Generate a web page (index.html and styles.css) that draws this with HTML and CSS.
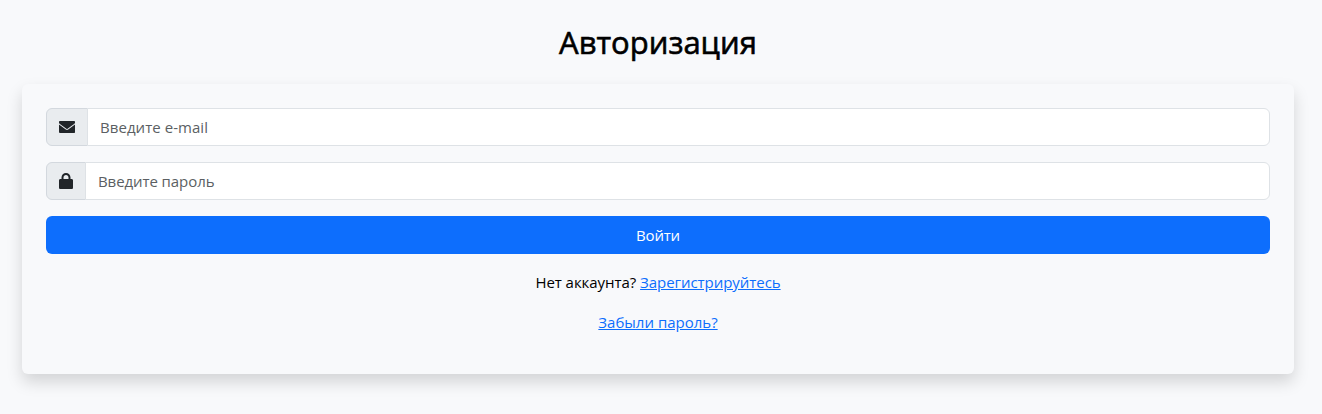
FILE: index.html
```
<!DOCTYPE html>
<html lang="ru">
<head>
<meta charset="utf-8">
<title>Авторизация</title>
<link rel="stylesheet" href="styles.css">
</head>
<body>
<main class="page">
  <h1 class="title">Авторизация</h1>
  <form class="card">
    <div class="group">
      <span class="addon"><svg class="icon" width="16" height="16" viewBox="0 0 512 512"><path d="M24 64C8 64 0 76 0 96v20c0 14 7.100 26.300 19.200 34.400L236.800 313.600c11.400 8.500 27 8.500 38.400 0L492.800 150.400c12.100-9.100 19.200-20 19.200-34.400V96c0-20-8-32-24-32H24zM0 176V416c0 22 10 32 32 32H480c22 0 32-10 32-32V176L294.400 339.200c-22.800 17.100-54 17.100-76.800 0L0 176z"/></svg></span>
      <input class="field field-email" type="email" placeholder="Введите e-mail">
    </div>
    <div class="group">
      <span class="addon"><svg class="icon" width="14" height="16" viewBox="0 0 448 512"><path d="M144 144v48H304V144c0-44.200-35.800-80-80-80s-80 35.800-80 80zM80 192V144C80 64.500 144.500 0 224 0s144 64.500 144 144v48h32c32 0 48 20 48 48V464c0 32-16 48-48 48H48c-32 0-48-16-48-48V240c0-28 16-48 48-48H80z"/></svg></span>
      <input class="field field-password" type="password" placeholder="Введите пароль">
    </div>
    <button class="submit" type="button">Войти</button>
    <p class="note note-register"><span class="ask">Нет аккаунта?</span> <a class="link link-register" href="#">Зарегистрируйтесь</a></p>
    <p class="note"><a class="link link-forgot" href="#">Забыли пароль?</a></p>
  </form>
</main>
</body>
</html>
```
FILE: styles.css
```
* { box-sizing: border-box; }
body {
  margin: 0;
  min-height: 100vh;
  background: #f8f9fb;
  color: #000;
  font: 400 15px/24px "Open Sans", "Noto Sans", sans-serif;
}
.page { min-height: 100vh; padding: 23px 28px 0 22px; }
.title {
  margin: 0 0 23px;
  font-size: 31px;
  font-weight: 500;
  line-height: 38px;
  text-align: center;
  -webkit-text-stroke: .6px #000;
}
.card {
  height: 290px;
  padding: 24px;
  border-radius: 6px;
  background: #f8f9fb;
  box-shadow: 0 8px 16px rgba(0, 0, 0, .15);
}
.group { display: flex; height: 38px; margin-bottom: 16px; }
.addon {
  display: flex;
  align-items: center;
  padding: 0 12px;
  border: 1px solid #d3d8de;
  border-radius: 6px 0 0 6px;
  background: #e9ecef;
}
.icon { display: block; fill: #212529; }
.field {
  flex: 1;
  min-width: 0;
  margin-left: -1px;
  padding: 6px 12px;
  border: 1px solid #dee2e6;
  border-radius: 0 6px 6px 0;
  background: #fff;
  color: #212529;
  font: inherit;
}
.field::placeholder { color: #5b5f63; opacity: 1; }
.field-email { letter-spacing: .05px; }
.field-password { letter-spacing: -.08px; }
.submit {
  display: block;
  width: 100%;
  height: 38px;
  padding: 0;
  border: 0;
  border-radius: 6px;
  background: #0d6efd;
  color: #fff;
  font: inherit;
  letter-spacing: -.2px;
}
.note { margin: 16px 0 0; text-align: center; }
.note-register { letter-spacing: -.05px; }
.link { color: #0d6efd; text-decoration: underline; }
```
